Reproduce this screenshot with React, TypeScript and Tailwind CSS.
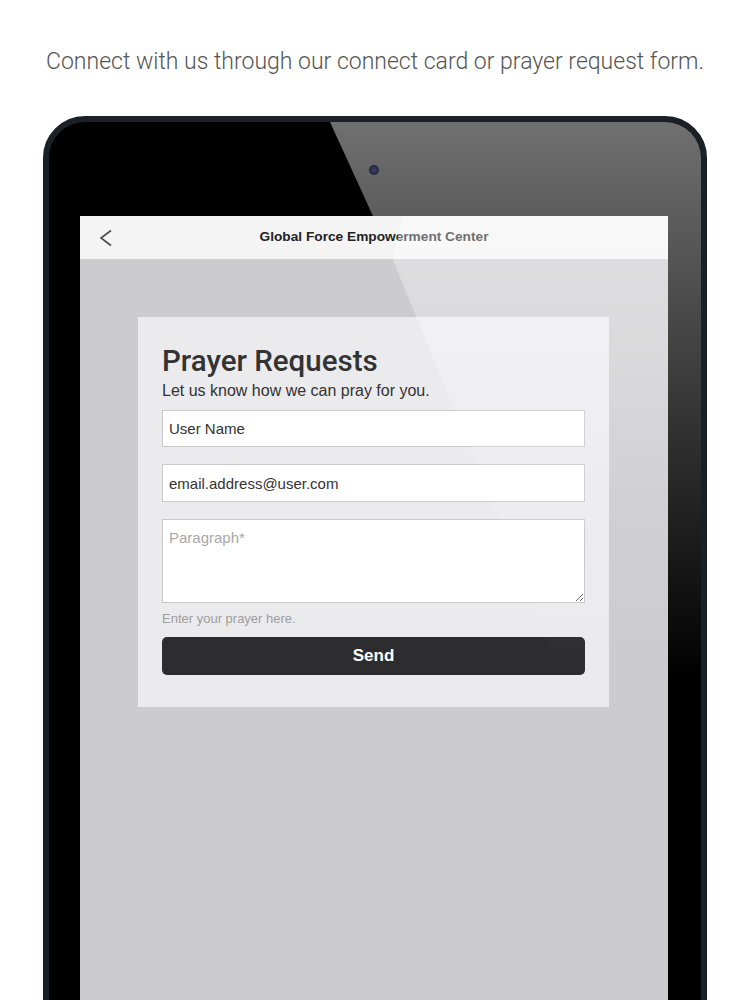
export default function App() {
  return (
    <div className="relative h-[1000px] w-[750px] overflow-hidden bg-white font-['Liberation_Sans',Arial,sans-serif]">
      <p className="pt-[49px] text-center font-['Roboto',sans-serif] text-[23px] font-light leading-[26px] text-[#555]">
        Connect with us through our connect card or prayer request form.
      </p>

      {/* tablet */}
      <div className="relative ml-[43px] mt-[41px] h-[940px] w-[664px] overflow-hidden rounded-[42px] border-[6px] border-[#1b2026] bg-black pl-[31px] pr-[33px]">
        {/* glare on the bezel */}
        <div className="pointer-events-none absolute inset-0 bg-[linear-gradient(to_bottom,rgba(255,255,255,0.44),rgba(255,255,255,0.2)_300px,rgba(255,255,255,0)_560px)] [clip-path:polygon(281px_0,100%_0,100%_812px)]" />

        <div className="relative flex h-[94px] justify-center pt-[43px]">
          <span className="h-[10px] w-[10px] rounded-full bg-[radial-gradient(circle,#3d4175_0%,#27293c_60%,#1d1e27_100%)]" />
        </div>

        <Screen />
      </div>
    </div>
  );
}

function Screen() {
  return (
    <div className="relative h-[820px] overflow-hidden bg-[#cccbd0]">
      <div className="grid h-[43px] grid-cols-[1fr_auto_1fr] items-center bg-[#f4f4f5]">
        <svg className="ml-[19px]" width="13" height="18" viewBox="0 0 13 18">
          <polyline
            points="12,1.5 2,9 12,16.5"
            fill="none"
            stroke="#4a4a4a"
            strokeWidth="1.6"
          />
        </svg>
        <h1 className="text-[13.7px] font-bold text-[#222]">
          Global Force Empowerment Center
        </h1>
        <span />
      </div>

      <form className="ml-[58px] mt-[58px] w-[471px] bg-[#ebeaed] px-6 pb-8 pt-[27px]">
        <h2 className="font-['Roboto',sans-serif] text-[29.5px] font-medium leading-[34px] text-[#333]">
          Prayer Requests
        </h2>
        <p className="mt-[3px] text-[16px] leading-[20px] text-[#333]">
          Let us know how we can pray for you.
        </p>
        <input
          readOnly
          defaultValue="User Name"
          className="mt-[9px] block h-[37px] w-full border border-[#c9c9c9] bg-white px-[6px] text-[15px] text-[#333] outline-none"
        />
        <input
          readOnly
          defaultValue="email.address@user.com"
          className="mt-[17px] block h-[38px] w-full border border-[#c9c9c9] bg-white px-[6px] text-[15px] text-[#333] outline-none"
        />
        <textarea
          placeholder="Paragraph*"
          className="mt-[17px] block h-[84px] w-full border border-[#c9c9c9] bg-white px-[6px] pt-[9px] text-[15px] leading-[18px] text-[#333] outline-none placeholder:text-[#a8a8a8]"
        />
        <p className="mt-[8px] text-[13px] leading-[16px] text-[#9d9d9d]">
          Enter your prayer here.
        </p>
        <button
          type="button"
          className="mt-[10px] block h-[38px] w-full rounded-[5px] bg-[#2d2c2f] text-[17px] font-bold text-white"
        >
          Send
        </button>
      </form>

      {/* glare on the glass */}
      <div className="pointer-events-none absolute inset-0 bg-[linear-gradient(to_bottom,rgba(255,255,255,0.36),rgba(255,255,255,0.28)_130px,rgba(255,255,255,0.08)_300px,rgba(255,255,255,0)_450px)] [clip-path:polygon(322px_0,100%_0,100%_715px,313px_44px)]" />
    </div>
  );
}
